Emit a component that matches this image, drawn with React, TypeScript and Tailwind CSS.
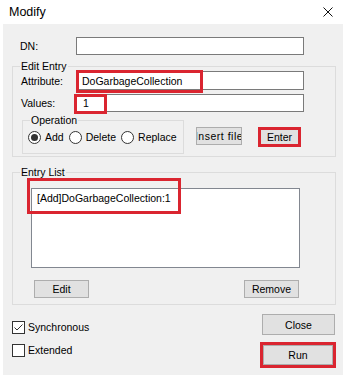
import type { ReactNode } from 'react';

// Windows style "Modify" dialog with red annotation boxes

function RedMark({ className }: { className: string }) {
  return <div className={`pointer-events-none absolute border-[3px] border-[#da2530] ${className}`} />;
}

function Radio({ label, checked }: { label: string; checked?: boolean }) {
  return (
    <div className="flex items-center">
      <span className="flex h-[13px] w-[13px] items-center justify-center rounded-full border border-[#333333] bg-white">
        {checked && <span className="h-[7px] w-[7px] rounded-full bg-[#333333]" />}
      </span>
      <span className="ml-[4px]">{label}</span>
    </div>
  );
}

function Check({ label, checked }: { label: string; checked?: boolean }) {
  return (
    <div className="flex items-center">
      <span className="flex h-[13px] w-[13px] items-center justify-center border border-[#333333] bg-white">
        {checked && (
          <svg width="11" height="11" viewBox="0 0 11 11">
            <polyline points="1.5,5.5 4,8 9.5,2.5" fill="none" stroke="#333333" strokeWidth="1" />
          </svg>
        )}
      </span>
      <span className="ml-[3px]">{label}</span>
    </div>
  );
}

function Btn({ children, className = '' }: { children: ReactNode; className?: string }) {
  return (
    <div
      className={`flex items-center justify-center overflow-hidden whitespace-nowrap border border-[#adadad] bg-[#e1e1e1] ${className}`}
    >
      {children}
    </div>
  );
}

export default function App() {
  return (
    <div className="flex h-[378px] w-[346px] flex-col bg-white font-['Liberation_Sans',Arial,sans-serif] text-[10.5px] leading-[14px] text-black">
      {/* Title bar */}
      <div className="flex h-[24px] shrink-0 items-center justify-between pl-[9px] pr-[13px]">
        <span className="text-[12.5px]">Modify</span>
        <svg width="10" height="10" viewBox="0 0 10 10">
          <path d="M0.5 0.5 L9.5 9.5 M9.5 0.5 L0.5 9.5" stroke="#111111" strokeWidth="1" />
        </svg>
      </div>

      {/* Client area */}
      <div className="mx-[3px] flex h-[351px] flex-col bg-[#f0f0f0] pl-[9px] pr-[7px]">
        {/* DN */}
        <div className="mt-[13px] flex h-[18px] items-center">
          <span className="w-[64px] pl-[8px]">DN:</span>
          <div className="h-[18px] w-[228px] border border-[#7a7a7a] bg-white" />
        </div>

        {/* Edit Entry */}
        <fieldset className="mt-[5px] border border-[#dcdcdc] pb-[2px]">
          <legend className="ml-[7px] px-[1px] leading-[12px]">Edit Entry</legend>
          <div className="-mt-[1px] flex h-[19px] items-center">
            <span className="w-[63px] pl-[8px]">Attribute:</span>
            <div className="relative flex h-[19px] w-[228px] items-center border border-[#7a7a7a] bg-white pl-[5px]">
              DoGarbageCollection
              <RedMark className="-left-[1px] -top-[2px] h-[23px] w-[127px]" />
            </div>
          </div>
          <div className="mt-[4px] flex h-[18px] items-center">
            <span className="w-[63px] pl-[8px]">Values:</span>
            <div className="relative flex h-[18px] w-[228px] items-center border border-[#7a7a7a] bg-white pl-[6px]">
              1
              <RedMark className="-left-[3px] -top-[1px] h-[20px] w-[33px]" />
            </div>
          </div>
          <div className="mt-[2px] flex items-start">
            <fieldset className="ml-[9px] h-[40px] w-[162px] border border-[#dcdcdc]">
              <legend className="ml-[7px] px-[1px] leading-[12px]">Operation</legend>
              <div className="ml-[5px] mt-[4px] flex items-center gap-[5px]">
                <Radio label="Add" checked />
                <Radio label="Delete" />
                <Radio label="Replace" />
              </div>
            </fieldset>
            <Btn className="ml-[12px] mt-[13px] h-[18px] w-[46px] tracking-[0.5px]">Insert file</Btn>
            <div className="relative ml-[16px] mt-[13px]">
              <Btn className="h-[20px] w-[43px]">Enter</Btn>
              <RedMark className="inset-0" />
            </div>
          </div>
        </fieldset>

        {/* Entry List */}
        <fieldset className="mt-[9px] border border-[#dcdcdc] pb-[6px]">
          <legend className="ml-[7px] px-[1px] leading-[12px]">Entry List</legend>
          <div className="relative ml-[18px] mt-[10px] h-[80px] w-[269px] border border-[#828790] bg-white pl-[5px] pt-[2px]">
            [Add]DoGarbageCollection:1
            <RedMark className="-left-[5px] -top-[11px] h-[36px] w-[154px]" />
          </div>
          <div className="mt-[12px] flex justify-between pl-[21px] pr-[36px]">
            <Btn className="h-[18px] w-[55px]">Edit</Btn>
            <Btn className="h-[18px] w-[55px]">Remove</Btn>
          </div>
        </fieldset>

        {/* Bottom */}
        <div className="flex justify-between">
          <div className="mt-[15px] flex flex-col gap-[9px]">
            <Check label="Synchronous" checked />
            <Check label="Extended" />
          </div>
          <div className="mt-[9px] flex flex-col items-end">
            <Btn className="mr-[1px] h-[21px] w-[73px]">Close</Btn>
            <div className="mt-[7px] h-[26px] w-[76px] border-[3px] border-[#da2530]">
              <Btn className="h-full w-full border-[#0078d7]">Run</Btn>
            </div>
          </div>
        </div>
      </div>
    </div>
  );
}
